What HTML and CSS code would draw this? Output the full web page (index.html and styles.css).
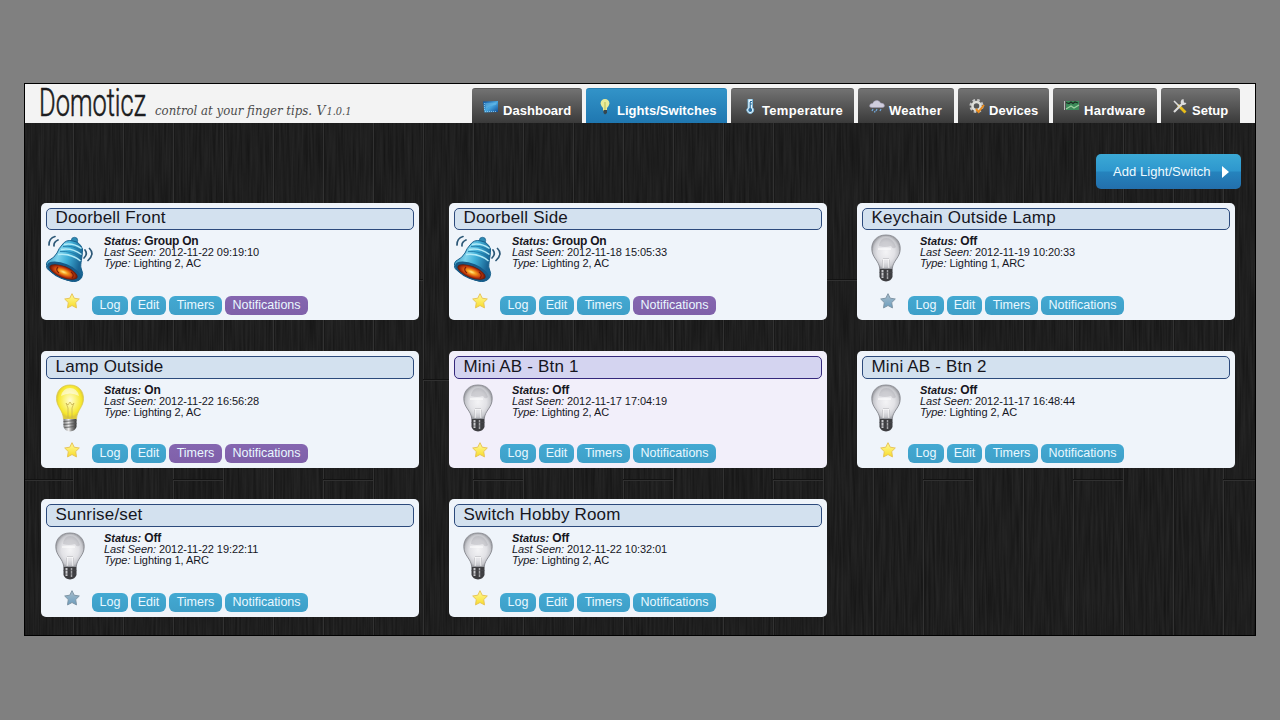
FILE: index.html
```html
<!DOCTYPE html>
<html lang="en">
<head>
<meta charset="utf-8">
<title>Domoticz</title>
<link rel="stylesheet" href="styles.css">
</head>
<body>
<svg class="defs" aria-hidden="true">
  <defs>
    <linearGradient id="gBell" x1="0" y1="0" x2="1" y2=".3"><stop offset="0" stop-color="#1d7fae"/><stop offset=".4" stop-color="#7dd2ec"/><stop offset=".65" stop-color="#3fafd8"/><stop offset="1" stop-color="#1a6594"/></linearGradient>
    <radialGradient id="gFire"><stop offset="0" stop-color="#fff08a"/><stop offset=".3" stop-color="#f79a1c"/><stop offset=".7" stop-color="#c43a0c"/><stop offset="1" stop-color="#5e1508"/></radialGradient>
    <radialGradient id="gOn" cx=".5" cy=".45"><stop offset="0" stop-color="#fffbd0"/><stop offset=".45" stop-color="#fbf37c"/><stop offset=".85" stop-color="#f6e72c"/><stop offset="1" stop-color="#ddc93a"/></radialGradient>
    <radialGradient id="gOff" cx=".5" cy=".5"><stop offset="0" stop-color="#f4f4f6"/><stop offset=".6" stop-color="#e2e2e6"/><stop offset=".88" stop-color="#c6c7cc"/><stop offset="1" stop-color="#a2a3a8"/></radialGradient>
    <linearGradient id="gBase"><stop offset="0" stop-color="#777"/><stop offset=".4" stop-color="#eee"/><stop offset=".6" stop-color="#999"/><stop offset="1" stop-color="#333"/></linearGradient>
    <linearGradient id="gStar" x1="0" y1="0" x2="0" y2="1"><stop offset="0" stop-color="#fffb9c"/><stop offset="1" stop-color="#f8dc28"/></linearGradient>
    <linearGradient id="gStarOff" x1="0" y1="0" x2="0" y2="1"><stop offset="0" stop-color="#a9bdcb"/><stop offset="1" stop-color="#6b9dbe"/></linearGradient>
    <linearGradient id="gScreen" x1="0" y1="0" x2="1" y2="1"><stop offset="0" stop-color="#0b4f9b"/><stop offset=".5" stop-color="#48a7e0"/><stop offset="1" stop-color="#0c4a94"/></linearGradient>
    <symbol id="bell" viewBox="0 0 48 48">
      <g fill="none" stroke="#2d5877" stroke-width="1.7" stroke-linecap="round"><path d="M3 11Q3 4 9 2.500M8 12Q7.500 8 12 6M39 16Q42 20 38 24M43.500 14.500Q49 20 42 26.500"/></g>
      <circle cx="28.500" cy="6.500" r="3.200" fill="#2d8ab4" stroke="#1b5f8a" stroke-width=".7"/>
      <path d="M16 11Q20 5 27 7Q34 8 36.500 15C36.500 24 34 30 35 34Q38 40 35.500 44Q31 49 24 47Q10 43 1 34.500Q-1 28 3.500 26Q8 24 11 19Q13 14 16 11Z" fill="url(#gBell)" stroke="#17608c" stroke-width="1"/>
      <path d="M18 10.500Q27 8.500 35.500 14.500M15 15.500Q26 13.500 35.500 20.500M12 20.500Q25 19 34.500 27" fill="none" stroke="#b2ebf8" stroke-width="1.500"/>
      <path d="M17 12.500Q27 11 35.500 17M14 17.500Q26 16.500 35 23.500" fill="none" stroke="#1b75a3" stroke-width=".8"/>
      <ellipse cx="18" cy="37.500" rx="18" ry="7.800" transform="rotate(22 18 37.500)" fill="#175a87"/>
      <ellipse cx="17.500" cy="38" rx="15" ry="5.800" transform="rotate(22 17.500 38)" fill="url(#gFire)"/>
      <path d="M12 33Q9 36 13 39M25 38Q29 41 26 44" fill="none" stroke="#7a1d09" stroke-width="1.200"/>
    </symbol>
    <symbol id="lamp-on" viewBox="0 0 30 48">
      <path d="M15 1C6 1 1.500 7.500 1.500 14.500C1.500 23 8 26 8.500 35H21.500C22 26 28.500 23 28.500 14.500C28.500 7.500 24 1 15 1Z" fill="url(#gOn)" stroke="#d9c84c" stroke-width=".8"/>
      <path d="M11 19L13 24V34M19 19L17 24V34M11 19L13 21L15 18L17 21L19 19" fill="none" stroke="#c9b450" stroke-width=".8"/>
      <path d="M6 12Q8 4 15 4Q22 4 24 12Q15 7 6 12Z" fill="#fff" opacity=".55"/>
      <path d="M8.500 35H21.500V43Q20 47 15 47.500Q10 47 8.500 43Z" fill="url(#gBase)"/><path d="M8.500 37.500L21.500 36.500M8.500 40.500L21.500 39.500M9.500 43.500L20.500 42.500" stroke="#555" stroke-width=".8"/>
    </symbol>
    <symbol id="lamp-off" viewBox="0 0 30 48">
      <path d="M15 1C5.500 1 .8 7.500 .8 14.500C.8 24 8 26 8.800 35H21.200C22 26 29.200 24 29.200 14.500C29.200 7.500 24.500 1 15 1Z" fill="url(#gOff)" stroke="#85868c" stroke-width=".9"/>
      <path d="M8 12Q9 4 15 4Q22 4 25 13Q22 16 20 12Q14 14 8 12Z" fill="#8f9097" opacity=".28"/>
      <path d="M7 15H20M12 25H18V34M12 25V34" fill="none" stroke="#fff" stroke-width="1"/>
      <path d="M11.500 25.500V34M18.500 25.500V34M12 24.500H18" fill="none" stroke="#b3b4b9" stroke-width=".6"/>
      <path d="M8.500 35H21.500V43Q20 47 15 47.500Q10 47 8.500 43Z" fill="#3d3d40"/><path d="M11.500 36V44" stroke="#c9c9cc" stroke-width="2"/><path d="M16.500 36V45" stroke="#a5a5a8" stroke-width="1.500"/><path d="M8.500 38.500H21.500M9 42H21" stroke="#4a4a4d" stroke-width=".6"/>
    </symbol>
    <symbol id="star" viewBox="0 0 16 16"><path d="M8 .7L10.200 5.200L15.300 6L11.700 9.600L12.500 14.900L8 12.500L3.500 14.900L4.300 9.600L.7 6L5.800 5.200Z" fill="url(#gStar)" stroke="#e8c558" stroke-width="1" stroke-linejoin="round"/></symbol>
    <symbol id="star-off" viewBox="0 0 16 16"><path d="M8 .7L10.200 5.200L15.300 6L11.700 9.600L12.500 14.900L8 12.500L3.500 14.900L4.300 9.600L.7 6L5.800 5.200Z" fill="url(#gStarOff)" stroke="#7f95a5" stroke-width="1" stroke-linejoin="round"/></symbol>
    <pattern id="planks" width="150" height="600" patternUnits="userSpaceOnUse" x="-2" y="-42">
      <path d="M.5 0V600M50.500 0V600M100.500 0V600" stroke="#323232"/>
      <path d="M1.500 0V600M51.500 0V600M101.500 0V600" stroke="#181818"/>
      <path d="M50 199.500H100M100 299.500H150M0 399.500H50" stroke="#303030"/>
      <path d="M50 198.500H100M100 298.500H150M0 398.500H50" stroke="#121212"/>
    </pattern>
    <filter id="grain" x="0" y="0" width="100%" height="100%" color-interpolation-filters="sRGB">
      <feTurbulence type="fractalNoise" baseFrequency=".48 .018" numOctaves="2" seed="7"/>
      <feColorMatrix values=".09 0 0 0 .073  .09 0 0 0 .073  .09 0 0 0 .073  0 0 0 0 1"/>
    </filter>
  </defs>
</svg>

<div class="window">
  <svg class="wood" width="1230" height="512" aria-hidden="true"><rect width="1230" height="512" filter="url(#grain)"/><rect width="1230" height="512" fill="url(#planks)"/></svg>
  <header class="header">
    <svg class="brand" width="330" height="39">
      <text class="brand-name" x="14" y="31.500" textLength="107" lengthAdjust="spacingAndGlyphs">Domoticz</text>
      <text class="brand-tag" x="130" y="31" textLength="157" lengthAdjust="spacingAndGlyphs">control at your finger tips.</text>
      <text class="brand-tag" x="291.500" y="31" textLength="9" lengthAdjust="spacingAndGlyphs">V</text>
      <text class="brand-tag small-digit" x="301.500" y="31" textLength="25" lengthAdjust="spacingAndGlyphs">1.0.1</text>
    </svg>
    <nav class="tabs">
      <a class="tab w-dash"><svg width="16" height="16" viewBox="0 0 16 16"><path d="M0 2.500L15 2V13L1.500 13.500Z" fill="url(#gScreen)"/><path d="M2 4L14 3.500L13 6Q7 6 3 10Z" fill="#75c3ec" opacity=".45"/><path d="M1.500 4V12M2 12.500H14" stroke="#a5daf3" stroke-width=".7" stroke-dasharray="1 1"/></svg><span>Dashboard</span></a>
      <a class="tab active w-light"><svg width="16" height="16" viewBox="0 0 16 16"><path d="M8 0Q4 0 3.500 4.500Q4 7 6 9V12H10V9Q12 7 12.500 4.500Q12 0 8 0Z" fill="#e9ec9b"/><path d="M8 3V11" stroke="#b9bd55"/><path d="M6.500 11H10V14L8 15.500L6.500 14Z" fill="#35474f"/></svg><span>Lights/Switches</span></a>
      <a class="tab w-temp"><svg width="16" height="16" viewBox="0 0 16 16"><path d="M6 0H10.500V8.500A3.400 3.400 0 1 1 6 8.500Z" fill="#eaf7ff" stroke="#70b6dd" stroke-width=".8"/><circle cx="8.200" cy="11" r="2" fill="#2b6e9e"/><path d="M8.200 3V11M8 2.500H10M8 5H10" stroke="#2b6e9e" stroke-width="1.200"/></svg><span>Temperature</span></a>
      <a class="tab w-weather"><svg width="16" height="16" viewBox="0 0 16 16"><path d="M3 8.500Q0 8.500 .8 6Q1.500 4.400 3.500 4.600Q5 1 8.500 1.500Q11 2 11.500 4Q15.500 4 15.500 7Q15 8.500 13 8.500Z" fill="#cfcddd" stroke="#a29db6" stroke-width=".5"/><path d="M4 10L3 12M8 10L7 12M12 10L11 12M6 12L5.500 13.500" stroke="#70a7d9" stroke-width="1.300"/></svg><span>Weather</span></a>
      <a class="tab w-devices"><svg width="16" height="16" viewBox="0 0 16 16"><circle cx="7.500" cy="7" r="5.800" fill="none" stroke="#c4c4c4" stroke-width="2.600" stroke-dasharray="2.500 2.055"/><circle cx="7.500" cy="7" r="4" fill="none" stroke="#deded8" stroke-width="2.500"/><path d="M7 10L9.500 13L15 6" fill="none" stroke="#e98b1d" stroke-width="2"/></svg><span>Devices</span></a>
      <a class="tab w-hardware"><svg width="16" height="16" viewBox="0 0 16 16"><path d="M.5 2V11" stroke="#bbb"/><path d="M2 2H15V11H2Z" fill="#3b8a59"/><path d="M2 10L7 7L10 9L15 6" fill="none" stroke="#9dd1a0" stroke-width="1.100"/><path d="M2 3.500L5 4.500L7 3L9 4.500L11 3L14 4" fill="none" stroke="#1c2a20" stroke-width="1.200"/></svg><span>Hardware</span></a>
      <a class="tab w-setup"><svg width="16" height="16" viewBox="0 0 16 16"><path d="M6 6L13.500 13.500" stroke="#e8bd19" stroke-width="2.800"/><path d="M2 2L7 7" stroke="#ddd" stroke-width="1.600"/><path d="M2 13L10.500 4.500" stroke="#ddd" stroke-width="2.200"/><path d="M11.500 0A3 3 0 1 0 14.500 4L12 3.500Z" fill="#ddd"/></svg><span>Setup</span></a>
    </nav>
  </header>

  <main class="content">
    <div class="toolbar"><a class="add">Add Light/Switch<i class="arrow"></i></a></div>
    <div class="grid">
      <section class="card">
        <h2>Doorbell Front</h2>
        <div class="info"><svg class="bell"><use href="#bell"/></svg><div class="lines"><b><i>Status:</i> Group On</b><p><i>Last Seen:</i> 2012-11-22 09:19:10</p><p><i>Type:</i> Lighting 2, AC</p></div></div>
        <div class="actions"><svg class="star"><use href="#star"/></svg><a class="w-log">Log</a><a class="w-edit">Edit</a><a class="w-timers">Timers</a><a class="w-notif set">Notifications</a></div>
      </section>
      <section class="card">
        <h2>Doorbell Side</h2>
        <div class="info"><svg class="bell"><use href="#bell"/></svg><div class="lines"><b><i>Status:</i> Group On</b><p><i>Last Seen:</i> 2012-11-18 15:05:33</p><p><i>Type:</i> Lighting 2, AC</p></div></div>
        <div class="actions"><svg class="star"><use href="#star"/></svg><a class="w-log">Log</a><a class="w-edit">Edit</a><a class="w-timers">Timers</a><a class="w-notif set">Notifications</a></div>
      </section>
      <section class="card">
        <h2>Keychain Outside Lamp</h2>
        <div class="info"><svg class="lamp"><use href="#lamp-off"/></svg><div class="lines"><b><i>Status:</i> Off</b><p><i>Last Seen:</i> 2012-11-19 10:20:33</p><p><i>Type:</i> Lighting 1, ARC</p></div></div>
        <div class="actions"><svg class="star"><use href="#star-off"/></svg><a class="w-log">Log</a><a class="w-edit">Edit</a><a class="w-timers">Timers</a><a class="w-notif">Notifications</a></div>
      </section>
      <section class="card low">
        <h2>Lamp Outside</h2>
        <div class="info"><svg class="lamp"><use href="#lamp-on"/></svg><div class="lines"><b><i>Status:</i> On</b><p><i>Last Seen:</i> 2012-11-22 16:56:28</p><p><i>Type:</i> Lighting 2, AC</p></div></div>
        <div class="actions"><svg class="star"><use href="#star"/></svg><a class="w-log">Log</a><a class="w-edit">Edit</a><a class="w-timers set">Timers</a><a class="w-notif set">Notifications</a></div>
      </section>
      <section class="card low protected">
        <h2>Mini AB - Btn 1</h2>
        <div class="info"><svg class="lamp"><use href="#lamp-off"/></svg><div class="lines"><b><i>Status:</i> Off</b><p><i>Last Seen:</i> 2012-11-17 17:04:19</p><p><i>Type:</i> Lighting 2, AC</p></div></div>
        <div class="actions"><svg class="star"><use href="#star"/></svg><a class="w-log">Log</a><a class="w-edit">Edit</a><a class="w-timers">Timers</a><a class="w-notif">Notifications</a></div>
      </section>
      <section class="card low">
        <h2>Mini AB - Btn 2</h2>
        <div class="info"><svg class="lamp"><use href="#lamp-off"/></svg><div class="lines"><b><i>Status:</i> Off</b><p><i>Last Seen:</i> 2012-11-17 16:48:44</p><p><i>Type:</i> Lighting 2, AC</p></div></div>
        <div class="actions"><svg class="star"><use href="#star"/></svg><a class="w-log">Log</a><a class="w-edit">Edit</a><a class="w-timers">Timers</a><a class="w-notif">Notifications</a></div>
      </section>
      <section class="card low last">
        <h2>Sunrise/set</h2>
        <div class="info"><svg class="lamp"><use href="#lamp-off"/></svg><div class="lines"><b><i>Status:</i> Off</b><p><i>Last Seen:</i> 2012-11-22 19:22:11</p><p><i>Type:</i> Lighting 1, ARC</p></div></div>
        <div class="actions"><svg class="star"><use href="#star-off"/></svg><a class="w-log">Log</a><a class="w-edit">Edit</a><a class="w-timers">Timers</a><a class="w-notif">Notifications</a></div>
      </section>
      <section class="card low last">
        <h2>Switch Hobby Room</h2>
        <div class="info"><svg class="lamp"><use href="#lamp-off"/></svg><div class="lines"><b><i>Status:</i> Off</b><p><i>Last Seen:</i> 2012-11-22 10:32:01</p><p><i>Type:</i> Lighting 2, AC</p></div></div>
        <div class="actions"><svg class="star"><use href="#star"/></svg><a class="w-log">Log</a><a class="w-edit">Edit</a><a class="w-timers">Timers</a><a class="w-notif">Notifications</a></div>
      </section>
    </div>
  </main>
</div>
</body>
</html>
```
FILE: styles.css
```css
* { box-sizing: border-box; }
body { margin: 0; height: 720px; padding: 83px 24px 0; overflow: hidden; background: #808080; font-family: "Liberation Sans", Arial, sans-serif; }
.defs { position: absolute; width: 0; height: 0; }
.window { position: relative; width: 1232px; height: 553px; border: 1px solid #000; background: #1e1e1e; }
.wood { position: absolute; left: 0; top: 39px; }
.header { position: relative; display: flex; justify-content: space-between; height: 39px; padding-right: 15px; background: #f3f3f3; }
.brand { display: block; overflow: visible; }
.brand-name { font-family: Roboto, sans-serif; font-size: 38.5px; font-weight: 300; fill: #1c1c20; stroke: #1c1c20; stroke-width: .6px; }
.brand-tag { font-family: "DejaVu Serif", serif; font-size: 13px; font-style: italic; fill: #4c4c4c; }
.brand-tag.small-digit { font-size: 10.5px; }
.tabs { display: flex; gap: 4px; align-items: flex-end; }
.tab { display: flex; align-items: flex-start; height: 35px; padding: 11px 0 0 11px; border-radius: 3px 3px 0 0; background: linear-gradient(#727272, #3a3a3a); border-top: 1px solid #5a5a5a; color: #fff; font-size: 13px; font-weight: bold; white-space: nowrap; }
.tab svg { flex: none; margin: -1px 4px 0 0; }
.tab span { line-height: 15px; padding-top: 3px; letter-spacing: .03px; }
.tab.active { background: linear-gradient(#3293c8, #1f77b0); border-top-color: #2780b2; }
.w-dash { width: 110px; }
.w-light { width: 141px; }
.w-temp { width: 123px; }
.w-weather { width: 96px; }
.w-devices { width: 91px; }
.w-hardware { width: 104px; }
.w-setup { width: 79px; }
.tab.w-temp span, .tab.w-weather span, .tab.w-hardware span { letter-spacing: .3px; }
.content { position: relative; padding: 31px 14px 0 16px; }
.toolbar { display: flex; justify-content: flex-end; height: 49px; }
.add { display: flex; align-items: center; width: 145px; height: 35px; padding-left: 17px; border-radius: 5px; background: linear-gradient(#3ba9d6, #2e97cd 48%, #2583bd 52%, #236fac); color: #eefaff; font-size: 13px; letter-spacing: .05px; }
.arrow { margin-left: 11px; border-left: 7px solid #fff; border-top: 6px solid transparent; border-bottom: 6px solid transparent; }
.grid { display: grid; grid-template-columns: repeat(3, 378px); gap: 31px 30px; }
.card { height: 117px; padding: 5px; border-radius: 5px; background: #eff4fa; color: #16161e; }
.card.last { height: 118px; }
.card h2 { margin: 0; height: 22px; padding-left: 8.5px; border: 1px solid #2c4a7c; border-radius: 5px; background: #d3e1ef; font-size: 17px; line-height: 17px; font-weight: normal; letter-spacing: .18px; }
.card.low h2 { height: 23px; line-height: 19px; }
.card.protected { background: #f2effa; }
.card.protected h2 { background: #d4d4f0; border-color: #35287c; }
.info { display: flex; height: 58px; padding-top: 4px; }
.card.low .info { padding-top: 5px; }
.bell { width: 48px; height: 48px; margin-right: 10px; }
.lamp { width: 30px; height: 48px; margin: 0 19px 0 9px; }
.lines { padding-top: 2px; font-size: 11px; line-height: 11px; letter-spacing: -.06px; white-space: nowrap; }
.card.low .lines { padding-top: 1px; }
.lines b { display: block; font-size: 12px; line-height: 11px; letter-spacing: -.25px; }
.lines b i { font-size: 11px; letter-spacing: 0; }
.lines p { margin: 0; }
.card.low .lines p:last-child { line-height: 10px; }
.actions { display: flex; gap: 3px; padding: 8px 0 0 18px; }
.card.low .actions { padding-top: 7px; }
.card.low.last .actions { padding-top: 8px; }
.star { width: 16px; height: 16px; margin: -3px 9px 0 0; }
.card.low .star { margin-top: -2px; }
.card.low.last .star { margin-top: -3px; }
.actions a { height: 19px; border-radius: 6px; background: linear-gradient(#43a9d2, #3e9fc8); color: #e9f8ff; font-size: 12.5px; line-height: 18px; text-align: center; }
.actions .set { background: linear-gradient(#8566b0, #7f60a9); }
.w-log { width: 36px; }
.w-edit { width: 35px; }
.w-timers { width: 53px; }
.w-notif { width: 83px; }
```
